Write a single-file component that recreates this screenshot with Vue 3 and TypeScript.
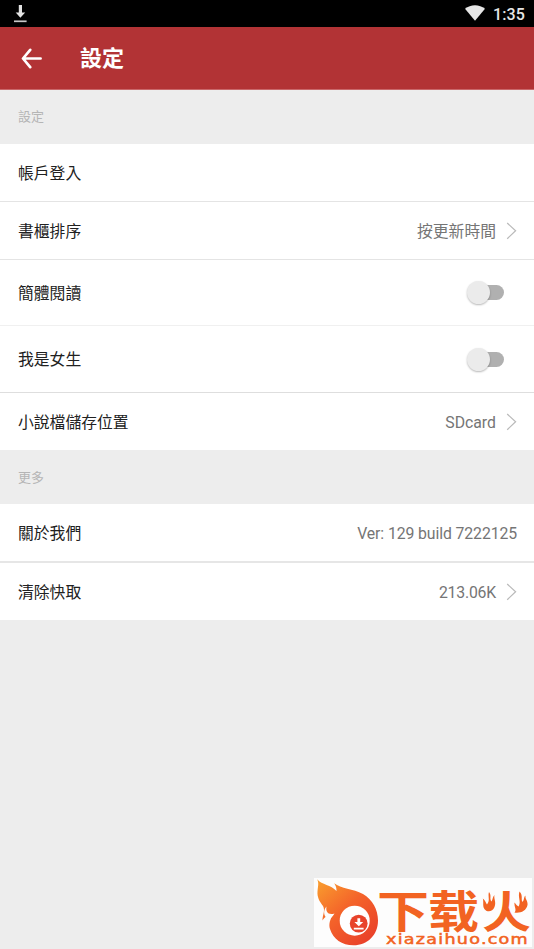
<script setup lang="ts">
interface Row {
  label: string
  value?: string
  arrow?: boolean
  toggle?: boolean
  size: string
}
interface Section {
  title: string
  rows: Row[]
}

const sections: Section[] = [
  {
    title: '設定',
    rows: [
      { label: '帳戶登入', size: 'normal' },
      { label: '書櫃排序', value: '按更新時間', arrow: true, size: 'normal' },
      { label: '簡體閱讀', toggle: true, size: 'tall' },
      { label: '我是女生', toggle: true, size: 'taller' },
      { label: '小說檔儲存位置', value: 'SDcard', arrow: true, size: 'last' },
    ],
  },
  {
    title: '更多',
    rows: [
      { label: '關於我們', value: 'Ver: 129 build 7222125', size: 'about' },
      { label: '清除快取', value: '213.06K', arrow: true, size: 'last' },
    ],
  },
]
</script>

<template>
  <div class="screen">
    <div class="status">
      <svg class="download" width="14" height="19" viewBox="0 0 14 19">
        <path d="M4.8 1h3.200v7.500H11.200L6.400 13.800 1.700 8.500h3.100z" fill="#e2e2e2" />
        <path d="M0 17.300h12.600" stroke="#c8c8c8" stroke-width="1.7" />
      </svg>
      <div class="status-right">
        <svg width="20" height="16" viewBox="0 0 20 16">
          <path d="M0 3.800C5.600-.9 14.400-.9 20 3.800L10 15.800z" fill="#e6e6e6" />
        </svg>
        <span class="clock">1:35</span>
      </div>
    </div>
    <header class="bar">
      <svg class="back" width="22" height="22" viewBox="0 0 22 22">
        <path d="M19.600 11.500H2.200M9.200 2.900L2 11.500l7.200 8.600" fill="none" stroke="#fff" stroke-width="2.7" stroke-linecap="round" stroke-linejoin="round" />
      </svg>
      <h1>設定</h1>
    </header>
    <section v-for="section in sections" :key="section.title">
      <h2>{{ section.title }}</h2>
      <div v-for="row in section.rows" :key="row.label" class="row" :class="row.size">
        <span class="label">{{ row.label }}</span>
        <span v-if="row.value" class="value">{{ row.value }}</span>
        <svg v-if="row.arrow" class="arrow" width="11" height="18" viewBox="0 0 11 18">
          <path d="M1.200 1L9.600 8.800 1.200 16.800" fill="none" stroke="#b9b9b9" stroke-width="1.2" />
        </svg>
        <span v-if="row.toggle" class="switch"><i class="thumb"></i></span>
      </div>
    </section>
    <svg class="brand" width="218" height="69" viewBox="0 0 218 69">
      <defs>
        <linearGradient id="flame" x1="0" y1="0" x2=".8" y2="1">
          <stop offset="0" stop-color="#f9a02e" />
          <stop offset=".5" stop-color="#f4632a" />
          <stop offset="1" stop-color="#e9402a" />
        </linearGradient>
      </defs>
      <rect width="218" height="69" fill="#fdfdfd" />
      <path d="M3.200 1.200C8 7 17 6.500 22.500 13 22.500 10 22 8 20.200 5.300 27 11 39 10.500 49 16 58.500 21.500 64 31.500 64 42.500 64 57 53.500 67.300 39.500 67.300 28 67.300 19 61 16 51 14.500 46 16 41 19.500 36 15 37 11 38 8.500 42.500 8.500 37 11.500 33 9 28 5.500 23.500 3 19 3.500 13.500 4 8 5 5 3.200 1.200Z" fill="url(#flame)" />
      <path d="M20.500 35.500C14 37.500 11.500 33.500 12.500 28.500 9 32.500 9.500 38 13.500 40.500 16.500 41 18.500 39 20.500 35.500Z" fill="#fdfdfd" />
      <circle cx="40.700" cy="42.700" r="15" fill="#fff" />
      <circle cx="44.700" cy="45.600" r="8.900" fill="#e8432b" />
      <path d="M43.400 40.200h2.800v3.700h3l-4.400 4.400-4.400-4.400h3zM39.800 49.700h9.800v1.700h-9.800z" fill="#fff" />
      <g class="brand-name">
        <text x="63" y="49.500" textLength="52" lengthAdjust="spacingAndGlyphs">下</text>
        <text x="114" y="49.500" textLength="51" lengthAdjust="spacingAndGlyphs">载</text>
        <text x="168" y="49.500" textLength="49" lengthAdjust="spacingAndGlyphs">火</text>
      </g>
      <path d="M166 12h20v14l-2 12h-18zM198 12H217v25h-16z" fill="#fdfdfd" />
      <path d="M175 14C178 18 175 20.500 177.500 23.500 179 21 178.500 19 180.500 17 179.500 21 182.500 23.500 180.500 29 178.500 34 173.500 34.500 170.800 31.500 168 28 170 24.500 168.800 20.500 171.500 22.500 171.500 24.500 173 26.500 176.500 22 173.500 18.500 175 14ZM205.500 13.500C209.500 18 206.500 21 208.500 24 210.500 21.500 209.500 19 211.500 17.500 211 22 214 22 213.500 27 212.500 33 206 35.500 200.500 34.500 203 32 200 29 200.500 24.500 202 26.500 203 27.500 204.500 28.500 207.500 23 203.500 20 205.500 13.500Z" fill="#f26322" />
      <text class="brand-url" x="72" y="65.800" textLength="143" lengthAdjust="spacingAndGlyphs">xiazaihuo.com</text>
    </svg>
  </div>
</template>

<style>
body {
  background: #ededed;
}
</style>

<style scoped>
.screen {
  position: relative;
  height: 949px;
  overflow: hidden;
  background: #ededed;
  font-family: Roboto, "Noto Sans CJK TC", sans-serif;
}
.status {
  display: flex;
  justify-content: space-between;
  height: 27px;
  padding: 4px 9px 0 14px;
  box-sizing: border-box;
  background: #000;
}
.status-right {
  display: flex;
  gap: 8px;
}
.status-right svg {
  margin-top: 1px;
}
.clock {
  color: #e6e6e6;
  font-size: 16px;
  font-weight: 500;
  line-height: 21px;
  letter-spacing: 0.1px;
}
.bar {
  display: flex;
  align-items: center;
  height: 63px;
  padding-left: 21px;
  box-sizing: border-box;
  background: #b23335;
  border-bottom: 1px solid #c9686a;
}
h1 {
  margin: 0 0 0 37px;
  padding-top: 2px;
  color: #fff;
  font-size: 22px;
  font-weight: 700;
  line-height: 32px;
}
h2 {
  height: 54px;
  margin: 0;
  padding-left: 18px;
  color: #b5b5b5;
  font-size: 13px;
  font-weight: 400;
  line-height: 54px;
}
section:last-of-type h2 {
  line-height: 56px;
}
.row {
  display: flex;
  align-items: center;
  height: 58px;
  padding: 0 17px 0 18px;
  box-sizing: border-box;
  background: #fff;
  border-bottom: 1px solid #e4e4e4;
  font-size: 15.8px;
  line-height: 24px;
}
.row.tall {
  height: 66px;
  border-bottom-color: #f0f0f0;
}
.row.taller {
  height: 67px;
  border-bottom-color: #dedede;
}
.row.last {
  height: 57px;
  border-bottom: 0;
}
.row.about {
  height: 59px;
  border-bottom: 2px solid #e6e6e6;
}
.label {
  flex: 1;
  padding-top: 2px;
  color: #212121;
}
.value {
  padding-top: 2px;
  color: #757575;
}
.about .value {
  letter-spacing: -0.1px;
}
.about + .last .value {
  letter-spacing: -0.2px;
}
.arrow {
  margin-left: 10px;
}
.switch {
  display: flex;
  align-items: center;
  width: 37px;
  height: 15px;
  margin-right: 13px;
  background: linear-gradient(#b0b0b0, #b0b0b0) right / 29px 15px no-repeat;
  border-radius: 8px;
}
.thumb {
  flex: none;
  width: 23px;
  height: 23px;
  border-radius: 50%;
  background: #ebebeb;
  box-shadow: 0 1px 2px rgba(0, 0, 0, 0.28);
}
.brand {
  position: absolute;
  right: 2px;
  bottom: 2px;
}
.brand-name {
  fill: #f26322;
  font-family: "Noto Sans CJK SC", sans-serif;
  font-size: 44px;
  font-weight: 700;
}
.brand-url {
  fill: #f26322;
  stroke: #f26322;
  stroke-width: 0.5px;
  font-family: "DejaVu Sans", sans-serif;
  font-size: 14px;
  letter-spacing: 1px;
}
</style>
